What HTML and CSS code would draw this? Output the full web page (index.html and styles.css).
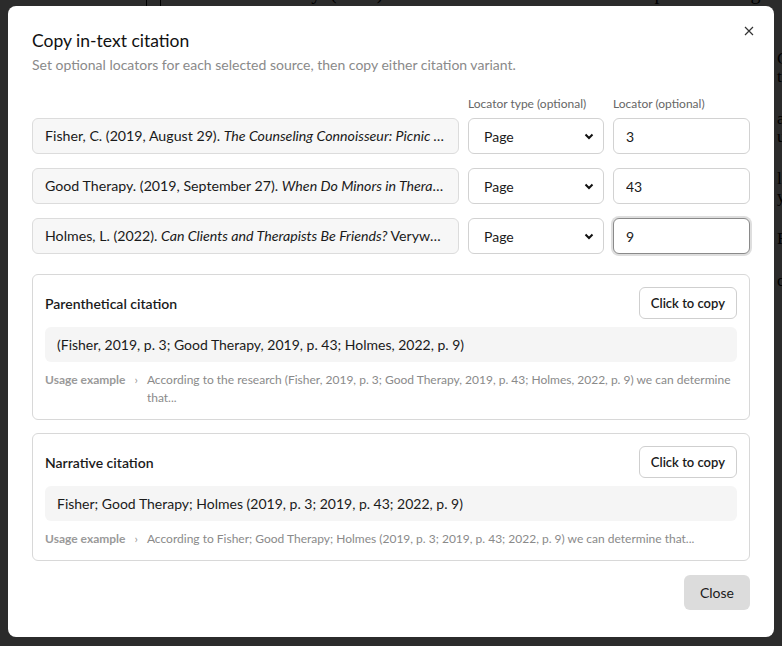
FILE: index.html
```html
<!DOCTYPE html>
<html lang="en">
<head>
  <meta charset="UTF-8"/>
  <meta name="viewport" content="width=device-width, initial-scale=1.0"/>
  <title>Copy in-text citation</title>
  <link rel="stylesheet" href="styles.css">
</head>
<body>

  <!-- Page behind the dialog -->
  <div class="page">
    <div class="page-rule"></div>
    <p class="page-top">Doctoral Journey. (2018). A Look at Ethical Issues in Group Counseling. In G.C.</p>
    <div class="page-side">
      <p>C<br>t</p>
      <p>a<br>u</p>
      <p>l<br>y</p>
      <p>F</p>
      <p>c</p>
    </div>
  </div>

  <div class="backdrop"></div>

  <!-- Dialog -->
  <div class="dialog">
    <button class="dialog-close" aria-label="Close">
      <svg width="10" height="10" viewBox="0 0 10 10"><path d="M1 1 L9 9 M9 1 L1 9" stroke="#333" stroke-width="1.2" fill="none"/></svg>
    </button>

    <h2 class="dialog-title">Copy in-text citation</h2>
    <p class="dialog-sub">Set optional locators for each selected source, then copy either citation variant.</p>

    <div class="source-grid">
      <div></div>
      <div class="col-label">Locator type (optional)</div>
      <div class="col-label">Locator (optional)</div>

      <div class="source">Fisher, C. (2019, August 29). <em>The Counseling Connoisseur: Picnic Table Talk: Professional Boundaries</em></div>
      <select class="locator-type"><option>Page</option></select>
      <input class="locator" type="text" value="3">

      <div class="source">Good Therapy. (2019, September 27). <em>When Do Minors in Therapy Have a Right to Confidentiality?</em></div>
      <select class="locator-type"><option>Page</option></select>
      <input class="locator" type="text" value="43">

      <div class="source">Holmes, L. (2022). <em>Can Clients and Therapists Be Friends?</em> Verywell Mind.</div>
      <select class="locator-type"><option>Page</option></select>
      <input class="locator is-focused" type="text" value="9">
    </div>

    <!-- Parenthetical -->
    <div class="cite-card">
      <div class="cite-head">
        <h3>Parenthetical citation</h3>
        <button class="copy-btn">Click to copy</button>
      </div>
      <div class="cite-text">(Fisher, 2019, p. 3; Good Therapy, 2019, p. 43; Holmes, 2022, p. 9)</div>
      <div class="usage">
        <span class="usage-label">Usage example</span>
        <span class="usage-arrow">&rsaquo;</span>
        <span class="usage-text">According to the research (Fisher, 2019, p. 3; Good Therapy, 2019, p. 43; Holmes, 2022, p. 9) we can determine that...</span>
      </div>
    </div>

    <!-- Narrative -->
    <div class="cite-card">
      <div class="cite-head">
        <h3>Narrative citation</h3>
        <button class="copy-btn">Click to copy</button>
      </div>
      <div class="cite-text">Fisher; Good Therapy; Holmes (2019, p. 3; 2019, p. 43; 2022, p. 9)</div>
      <div class="usage">
        <span class="usage-label">Usage example</span>
        <span class="usage-arrow">&rsaquo;</span>
        <span class="usage-text">According to Fisher; Good Therapy; Holmes (2019, p. 3; 2019, p. 43; 2022, p. 9) we can determine that...</span>
      </div>
    </div>

    <div class="dialog-foot">
      <button class="close-btn">Close</button>
    </div>
  </div>

</body>
</html>
```

FILE: styles.css
```css
/**********************************************
 *  Page + backdrop
 **********************************************/
body {
  margin: 0;
  padding: 0;
  background: #fff;
  font-family: "Segoe UI", Lato, "Noto Sans", sans-serif;
  color: #1a1a1a;
  overflow: hidden;
}

.page {
  position: relative;
  height: 646px;
  font-family: "Liberation Serif", serif;
  color: #000;
}

.page-rule {
  position: absolute;
  left: 146px;
  top: 0;
  width: 13px;
  height: 6px;
  border-left: 1px solid #000;
  border-right: 1px solid #000;
}

.page-top {
  position: absolute;
  left: 183px;
  top: -19px;
  margin: 0;
  font-size: 20px;
}

.page-side {
  position: absolute;
  left: 777px;
  top: 50px;
  font-size: 17px;
  line-height: 18px;
}

.page-side p {
  margin: 0 0 24px;
}

.backdrop {
  position: fixed;
  inset: 0;
  background: rgba(0, 0, 0, 0.83);
}

/**********************************************
 *  Dialog
 **********************************************/
.dialog {
  position: fixed;
  left: 8px;
  top: 6px;
  width: 766px;
  height: 631px;
  box-sizing: border-box;
  padding: 24px 24px 0;
  background: #fff;
  border-radius: 8px;
}

.dialog-close {
  position: absolute;
  top: 13px;
  right: 13px;
  width: 24px;
  height: 24px;
  padding: 0;
  border: none;
  background: none;
  display: flex;
  align-items: center;
  justify-content: center;
  cursor: pointer;
}

.dialog-title {
  margin: 0;
  font-size: 17.5px;
  font-weight: 400;
  line-height: 22px;
  color: #111;
}

.dialog-sub {
  margin: 4px 0 0;
  font-size: 14px;
  line-height: 18px;
  color: #8a8a8a;
}

/**********************************************
 *  Source rows
 **********************************************/
.source-grid {
  display: grid;
  grid-template-columns: 1fr 136px 137px;
  column-gap: 9px;
  row-gap: 14px;
  margin-top: 22px;
}

.col-label {
  font-size: 12px;
  line-height: 16px;
  color: #666;
  margin-bottom: -8px;
}

.source {
  height: 36px;
  box-sizing: border-box;
  padding: 0 12px;
  line-height: 34px;
  font-size: 14.2px;
  background: #f7f7f7;
  border: 1px solid #dcdcdc;
  border-radius: 6px;
  white-space: nowrap;
  overflow: hidden;
  text-overflow: ellipsis;
}

.locator-type,
.locator {
  height: 36px;
  box-sizing: border-box;
  font-family: inherit;
  font-size: 14px;
  color: #1a1a1a;
  background: #fff;
  border: 1px solid #d2d2d2;
  border-radius: 6px;
}

.locator-type {
  padding: 0 12px 0 15px;
  appearance: none;
  background-image: url("data:image/svg+xml,%3Csvg xmlns='http://www.w3.org/2000/svg' width='10' height='7' viewBox='0 0 10 7'%3E%3Cpath d='M1.5 1.5 L5 5 L8.5 1.5' stroke='%23111' stroke-width='2' fill='none'/%3E%3C/svg%3E");
  background-repeat: no-repeat;
  background-position: right 9px center;
}

.locator {
  padding: 0 12px;
}

.locator.is-focused {
  border: 1px solid #8a8a8a;
  box-shadow: 0 0 0 2px #dedede;
}

/**********************************************
 *  Citation cards
 **********************************************/
.cite-card {
  margin-top: 20px;
  padding: 12px;
  border: 1px solid #d8d8d8;
  border-radius: 6px;
}

.cite-card + .cite-card {
  margin-top: 13px;
}

.cite-head {
  display: flex;
  align-items: center;
  justify-content: space-between;
}

.cite-head h3 {
  margin: 0;
  font-size: 14px;
  font-weight: 600;
}

.copy-btn {
  height: 32px;
  padding: 0 11px;
  font-family: inherit;
  font-size: 13px;
  font-weight: 600;
  color: #1a1a1a;
  background: #fff;
  border: 1px solid #cfcfcf;
  border-radius: 6px;
  cursor: pointer;
}

.cite-text {
  margin-top: 8px;
  padding: 0 12px;
  height: 35px;
  line-height: 35px;
  font-size: 14px;
  background: #f5f5f5;
  border-radius: 6px;
}

.usage {
  display: flex;
  gap: 9px;
  margin-top: 9px;
  font-size: 12px;
  line-height: 18px;
  color: #8a8a8a;
}

.usage-label {
  flex: none;
  font-weight: 700;
  color: #9a9a9a;
}

.usage-arrow {
  flex: none;
  color: #999;
}

/**********************************************
 *  Footer
 **********************************************/
.dialog-foot {
  display: flex;
  justify-content: flex-end;
  margin-top: 14px;
}

.close-btn {
  height: 35px;
  padding: 0 16px;
  font-family: inherit;
  font-size: 14px;
  color: #1a1a1a;
  background: #dcdcdc;
  border: none;
  border-radius: 6px;
  cursor: pointer;
}
```
